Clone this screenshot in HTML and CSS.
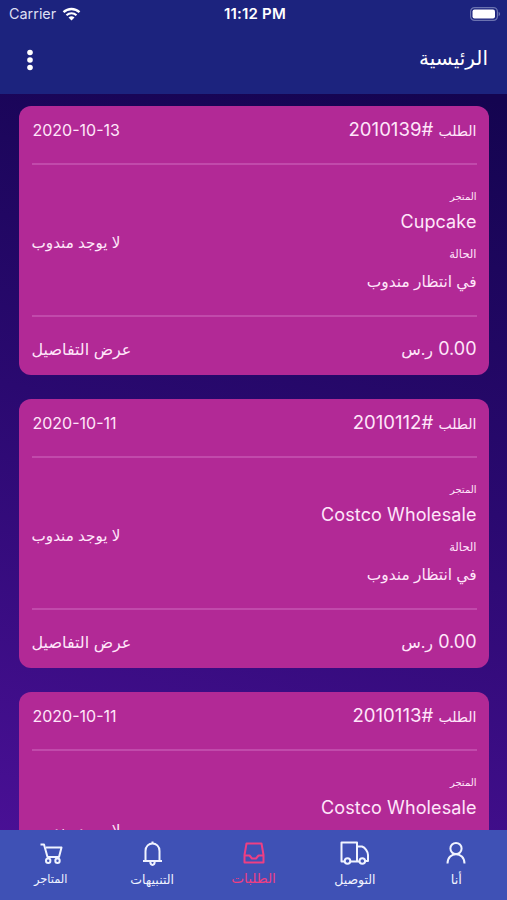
FILE: index.html
```html
<!DOCTYPE html>
<html lang="ar" dir="rtl">
<head>
  <meta charset="UTF-8">
  <meta name="viewport" content="width=device-width, initial-scale=1">
  <title>الرئيسية</title>
  <link rel="stylesheet" href="styles.css">
</head>
<body>
  <div class="app">
    <header class="header">
      <div class="status-bar" dir="ltr">
        <div class="carrier">
          <span>Carrier</span>
          <svg class="wifi" width="19" height="14" viewBox="0 0 18 14">
            <path d="M1 5.2a11.6 11.6 0 0 1 16 0" fill="none" stroke="#fff" stroke-width="2.3"/>
            <path d="M4 8.2a7.4 7.4 0 0 1 10 0" fill="none" stroke="#fff" stroke-width="2.2"/>
            <path d="M9 13.6L6 10.6a4.4 4.4 0 0 1 6 0z" fill="#fff"/>
          </svg>
        </div>
        <span class="clock">11:12 PM</span>
        <svg class="battery" width="31" height="14" viewBox="0 0 31 14">
          <rect x="0.6" y="0.6" width="26.8" height="12.8" rx="4" fill="none" stroke="#6b73b0" stroke-width="1.2"/>
          <rect x="2.5" y="2.5" width="22.5" height="9" rx="2" fill="#fff"/>
          <path d="M28.6 4.8c2 .8 2 3.6 0 4.4z" fill="#6b73b0"/>
        </svg>
      </div>
      <div class="title-bar">
        <h1 class="title">الرئيسية</h1>
        <svg class="menu" width="8" height="22" viewBox="0 0 8 22" fill="#fff">
          <circle cx="4" cy="3.5" r="2.8"/>
          <circle cx="4" cy="11" r="2.8"/>
          <circle cx="4" cy="18.5" r="2.8"/>
        </svg>
      </div>
    </header>

    <main class="orders">
      <div class="card">
        <div class="card-head">
          <span class="order"><span class="word">الطلب</span> <bdi>#</bdi><bdi>2010139</bdi></span>
          <span class="date">2020-10-13</span>
        </div>
        <div class="card-body">
          <div class="info">
            <span class="label">المتجر</span>
            <span class="store">Cupcake</span>
            <span class="label label-status">الحالة</span>
            <span class="status">في انتظار مندوب</span>
          </div>
          <span class="driver">لا يوجد مندوب</span>
        </div>
        <div class="card-foot">
          <span class="price">0.00 <span class="currency">ر.س</span></span>
          <a class="details">عرض التفاصيل</a>
        </div>
      </div>

      <div class="card">
        <div class="card-head">
          <span class="order"><span class="word">الطلب</span> <bdi>#</bdi><bdi>2010112</bdi></span>
          <span class="date">2020-10-11</span>
        </div>
        <div class="card-body">
          <div class="info">
            <span class="label">المتجر</span>
            <span class="store">Costco Wholesale</span>
            <span class="label label-status">الحالة</span>
            <span class="status">في انتظار مندوب</span>
          </div>
          <span class="driver">لا يوجد مندوب</span>
        </div>
        <div class="card-foot">
          <span class="price">0.00 <span class="currency">ر.س</span></span>
          <a class="details">عرض التفاصيل</a>
        </div>
      </div>

      <div class="card">
        <div class="card-head">
          <span class="order"><span class="word">الطلب</span> <bdi>#</bdi><bdi>2010113</bdi></span>
          <span class="date">2020-10-11</span>
        </div>
        <div class="card-body">
          <div class="info">
            <span class="label">المتجر</span>
            <span class="store">Costco Wholesale</span>
          </div>
          <span class="driver">لا يوجد مندوب</span>
        </div>
      </div>
    </main>

    <nav class="tabs">
      <a class="tab">
        <svg width="30" height="26" viewBox="0 0 30 26">
          <circle cx="15" cy="8.5" r="5.6"/>
          <path d="M6.500 23.500c0-12.500 17-12.500 17 0"/>
        </svg>
        <span class="tab-me">أنا</span>
      </a>
      <a class="tab">
        <svg width="30" height="26" viewBox="0 0 30 26">
          <path d="M4.500 21.500H1.500V2.500H17V21.500H10.500M17 6.500H22c3 1 6 5 6 8.500V21h-2.500M17 21.500h2"/>
          <circle cx="7.500" cy="21" r="2.800"/>
          <circle cx="22.300" cy="21" r="2.800"/>
        </svg>
        <span class="tab-delivery">التوصيل</span>
      </a>
      <a class="tab active">
        <svg width="30" height="26" viewBox="0 0 30 26">
          <path d="M7.500 3.500H22.500L24.500 15V22.500H5.500V15z"/>
          <path d="M5.500 15.500H10.500L13 18.500H17L19.500 15.500H24.500"/>
        </svg>
        <span class="tab-orders">الطلبات</span>
      </a>
      <a class="tab">
        <svg width="30" height="26" viewBox="0 0 30 26">
          <path d="M6 21H25M8.500 21V11c0-10 14-10 14 0V21"/>
          <path d="M15.500 3.500V1.500M13.300 21.500c0 4.500 4.400 4.500 4.400 0"/>
        </svg>
        <span class="tab-alerts">التنبيهات</span>
      </a>
      <a class="tab">
        <svg width="30" height="26" viewBox="0 0 30 26">
          <path d="M4.500 4.500H8L11.500 17H23L25.500 7.500H10"/>
          <circle cx="12.200" cy="20.800" r="2.200"/>
          <circle cx="21.500" cy="20.800" r="2.200"/>
        </svg>
        <span class="tab-stores">المتاجر</span>
      </a>
    </nav>
  </div>
</body>
</html>
```
FILE: styles.css
```css
* {
  box-sizing: border-box;
}

body {
  margin: 0;
  font-family: Inter, 'DejaVu Sans', sans-serif;
  color: #fff;
}

.app {
  display: flex;
  flex-direction: column;
  height: 900px;
  overflow: hidden;
  background: linear-gradient(195deg, #140450 10%, #2a0970 50%, #4a1096 95%);
}

.header {
  flex: none;
  height: 94px;
  background-color: #1c237e;
}

.status-bar {
  display: grid;
  grid-template-columns: 1fr auto 1fr;
  align-items: center;
  height: 27px;
  padding: 0 6px 0 9px;
  font-size: 14px;
}

.carrier {
  display: flex;
  align-items: center;
  gap: 6px;
  font-size: 14.4px;
  color: #dcdff2;
}

.clock {
  font-size: 15px;
  font-weight: 600;
  letter-spacing: 0.2px;
}

.battery {
  justify-self: end;
}

.title-bar {
  display: flex;
  align-items: center;
  justify-content: space-between;
  height: 66px;
  padding: 0 19px 0 26px;
}

.title {
  margin: 0 0 4px;
  font-size: 20px;
  font-weight: 400;
}

.orders {
  flex: 1;
  min-height: 0;
  overflow: hidden;
  padding: 12px 18px 0 19px;
}

.card {
  height: 269px;
  margin-bottom: 24px;
  padding: 0 12.5px;
  border-radius: 12px;
  background-color: #b22996;
  color: #ffe6fa;
}

.card-head {
  display: flex;
  justify-content: space-between;
  height: 59px;
  line-height: 46px;
  border-bottom: 2px solid #c14aab;
}

.order,
.store,
.price {
  font-size: 18px;
}

.order {
  font-size: 18.6px;
}

.word {
  font-size: 14px;
}

.date {
  padding-left: 1px;
  font-size: 16px;
  line-height: 48px;
}

.card-body {
  display: flex;
  align-items: center;
  justify-content: space-between;
  height: 152px;
  border-bottom: 2px solid #c14aab;
}

.card:last-child .card-body {
  padding-bottom: 56px;
}

.card:last-child .driver {
  margin-top: 60px;
}

.info {
  display: flex;
  flex-direction: column;
}

.label {
  font-size: 10px;
  line-height: 20px;
}

.store {
  line-height: 32px;
  letter-spacing: 0.1px;
}

.label-status {
  font-size: 11.5px;
  line-height: 32px;
}

.status {
  font-size: 15.4px;
  line-height: 24px;
}

.driver {
  padding-top: 4px;
  font-size: 15.2px;
}

.card-foot {
  display: flex;
  justify-content: space-between;
  line-height: 64px;
}

.currency,
.details {
  font-size: 16px;
}

.tabs {
  display: grid;
  grid-template-columns: repeat(5, 1fr);
  flex: none;
  height: 70px;
  padding-top: 10px;
  background-color: #3f51b5;
}

.tab {
  display: flex;
  flex-direction: column;
  align-items: center;
  font-size: 12.5px;
  line-height: 27px;
  color: #f0f3ff;
}

.tab svg {
  fill: none;
  stroke: currentColor;
  stroke-width: 2;
  stroke-linejoin: round;
}

.tab.active {
  color: #ee3f83;
}

.tab-me {
  font-size: 13px;
}

.tab-orders {
  font-size: 13.6px;
  line-height: 24px;
}

.tab-stores {
  font-size: 11.4px;
}
```
